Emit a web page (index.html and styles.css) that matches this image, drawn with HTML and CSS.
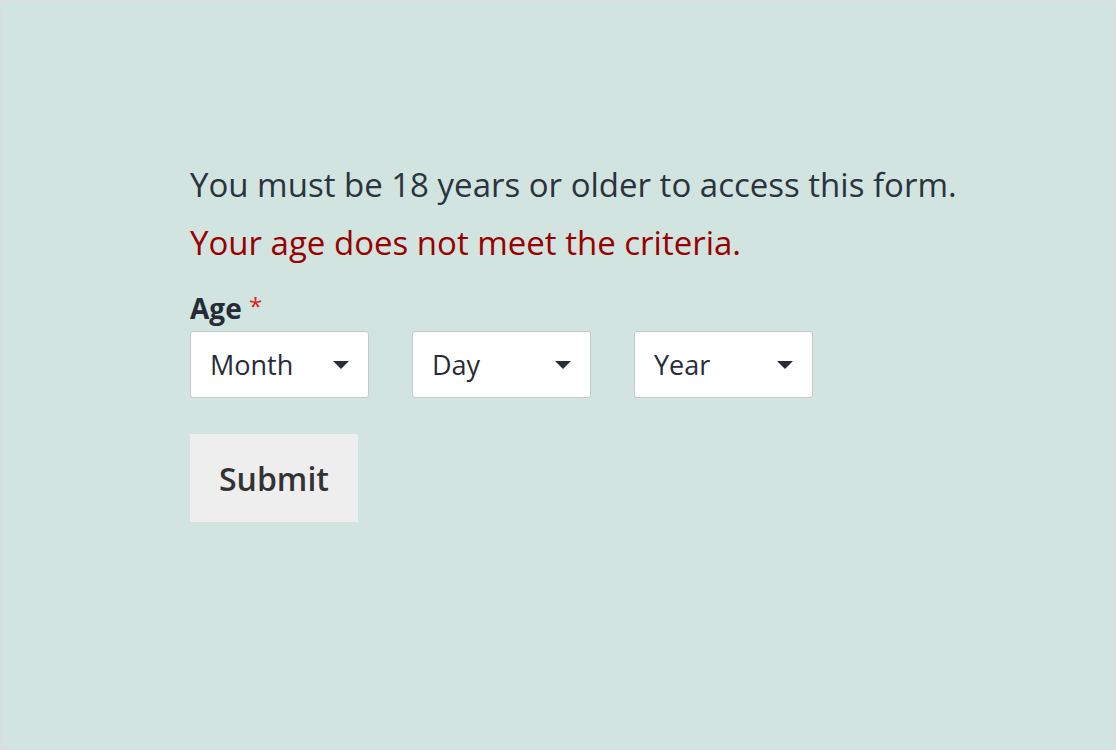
FILE: index.html
```html
<!DOCTYPE html>
<html>
<head>
<meta charset="utf-8">
<link rel="stylesheet" href="styles.css">
</head>
<body>
<div class="page">
  <form class="form">
    <p class="notice">You must be 18 years or older to access this form.</p>
    <p class="error">Your age does not meet the criteria.</p>
    <div class="field">
      <div class="label">Age <span class="req">*</span></div>
      <div class="selects">
        <div class="select"><span>Month</span><svg class="caret" width="16" height="8" viewBox="0 0 16 8"><path d="M0 0H16L8 8Z" fill="#272c38"/></svg></div>
        <div class="select"><span>Day</span><svg class="caret" width="16" height="8" viewBox="0 0 16 8"><path d="M0 0H16L8 8Z" fill="#272c38"/></svg></div>
        <div class="select"><span>Year</span><svg class="caret" width="16" height="8" viewBox="0 0 16 8"><path d="M0 0H16L8 8Z" fill="#272c38"/></svg></div>
      </div>
    </div>
    <div class="submit">Submit</div>
  </form>
</div>
</body>
</html>
```
FILE: styles.css
```css
html, body { margin: 0; padding: 0; }
body {
  font-family: "Open Sans", "Noto Sans", sans-serif;
  background: #d2e4df;
}
.page {
  box-sizing: border-box;
  width: 1116px;
  height: 750px;
  border: 1px solid #dcdcdc;
  background: #d2e4df;
  padding: 159px 0 0 189px;
}
.form { display: flex; flex-direction: column; align-items: flex-start; }
.notice {
  margin: 0;
  font-size: 33px;
  line-height: 50px;
  color: #2b3340;
}
.error {
  margin: 8px 0 0;
  font-size: 33px;
  line-height: 50px;
  color: #990000;
}
.field { margin-top: 20px; }
.label {
  font-size: 28px;
  font-weight: 700;
  color: #262b37;
  line-height: 36px;
}
.req { color: #e02020; font-weight: 400; font-size: 24px; vertical-align: 4px; }
.selects { display: flex; gap: 43px; margin-top: 5px; }
.select {
  box-sizing: border-box;
  width: 179px;
  height: 67px;
  background: #fff;
  border: 1px solid #c8c8c8;
  border-radius: 3px;
  display: flex;
  align-items: center;
  justify-content: space-between;
  padding: 0 19px 0 19px;
  font-size: 27px;
  color: #272c38;
}
.caret { display: block; }
.submit {
  margin-top: 36px;
  box-sizing: border-box;
  width: 168px;
  height: 88px;
  background: #eeeeee;
  display: flex;
  align-items: center;
  justify-content: center;
  font-size: 32px;
  font-weight: 600;
  color: #333;
}
```
